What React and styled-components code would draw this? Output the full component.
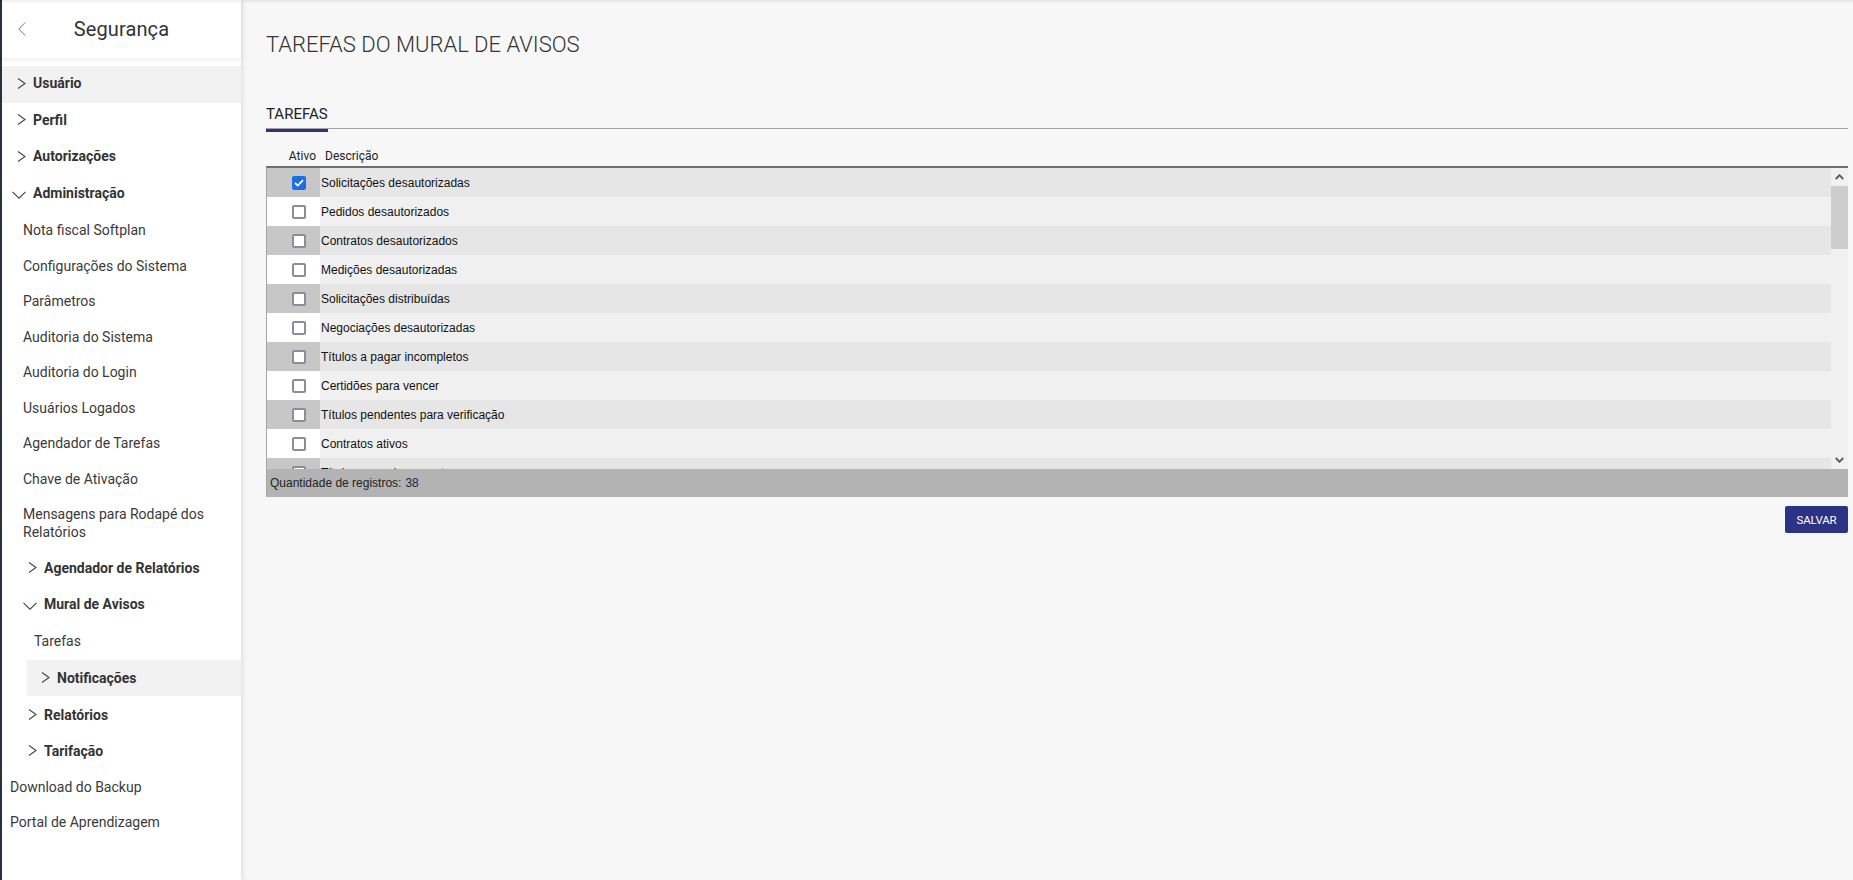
import React from 'react'
import styled, { createGlobalStyle } from 'styled-components'

const GlobalStyle = createGlobalStyle`
  html, body {
    margin: 0;
    padding: 0;
    height: 100%;
  }
  body {
    font-family: Roboto, "Noto Sans", sans-serif;
    color: #333;
    background: #f7f7f7;
  }
  #root {
    height: 100%;
  }
`

const Layout = styled.div`
  position: relative;
  display: flex;
  height: 100vh;
  overflow: hidden;
  background: #f7f7f7;

  &::before {
    content: '';
    position: absolute;
    top: 0;
    left: 0;
    right: 0;
    height: 4px;
    background: linear-gradient(rgba(0, 0, 0, 0.07), rgba(0, 0, 0, 0));
    z-index: 3;
    pointer-events: none;
  }
`

const Sidebar = styled.aside`
  position: relative;
  z-index: 1;
  width: 239px;
  flex-shrink: 0;
  background: #fff;
  border-left: 2px solid #29303e;
  box-shadow: 2px 0 5px rgba(0, 0, 0, 0.09);
  display: flex;
  flex-direction: column;
`

const SideHeader = styled.header`
  height: 58px;
  display: grid;
  grid-template-columns: 1fr auto 1fr;
  align-items: center;
  box-shadow: 0 2px 4px rgba(0, 0, 0, 0.07);

  h1 {
    margin: 0;
    font-size: 20px;
    font-weight: 400;
    color: #333;
    letter-spacing: 0.1px;
  }
`

const BackButton = styled.span`
  justify-self: start;
  margin-left: 16px;
  display: flex;
  align-items: center;
`

const Menu = styled.nav`
  margin-top: 8px;
  display: flex;
  flex-direction: column;
`

const GroupRow = styled.div`
  box-sizing: border-box;
  display: flex;
  align-items: center;
  height: ${p => p.$h}px;
  padding-bottom: ${p => p.$lift}px;
  margin-left: ${p => p.$inset}px;
  padding-left: ${p => p.$pad}px;
  background: ${p => (p.$active ? '#f2f2f2' : 'transparent')};
  font-size: 14px;
  font-weight: 700;
  color: #333;
`

const ChevronBox = styled.span`
  width: 15px;
  margin-right: 7px;
  display: flex;
  justify-content: flex-end;
  align-items: center;
  padding-top: ${p => (p.$open ? 4 : 0)}px;
`

const LinkRow = styled.div`
  padding: ${p => p.$padY}px 12px ${p => p.$padY}px ${p => p.$pad}px;
  font-size: 14px;
  line-height: 18px;
  color: #3a3a3a;
`

const Main = styled.main`
  flex: 1;
  min-width: 0;
  padding: 31px 5px 0 25px;
  display: flex;
  flex-direction: column;
`

const Title = styled.h2`
  margin: 0;
  font-size: 22px;
  line-height: 28px;
  font-weight: 300;
  color: #333;
`

const TabStrip = styled.div`
  margin-top: 46px;
  padding-bottom: 5px;
  border-bottom: 1px solid #a3a3a3;
  display: flex;
`

const Tab = styled.span`
  position: relative;
  font-size: 15px;
  line-height: 18px;
  color: #222;

  &::after {
    content: '';
    position: absolute;
    left: 0;
    right: 0;
    bottom: -9px;
    height: 3px;
    background: ${p => (p.$active ? '#2b3286' : 'transparent')};
  }
`

const HeadRow = styled.div`
  margin-top: 16px;
  height: 21px;
  display: flex;
  align-items: center;
  font-size: 12px;
  color: #222;
`

const HeadCell = styled.span`
  width: ${p => (p.$w ? `${p.$w}px` : 'auto')};
  flex: ${p => (p.$w ? 'none' : 1)};
  text-align: ${p => p.$align || 'left'};
  padding: ${p => p.$pad};
  box-sizing: border-box;
`

const Table = styled.section`
  border-top: 2px solid #6e6e6e;
  border-left: 1px solid #a6a6a6;
  display: flex;
  flex-direction: column;
`

const Body = styled.div`
  display: flex;
  height: 301px;
`

const Rows = styled.div`
  flex: 1;
  overflow: hidden;
  display: flex;
  flex-direction: column;
`

const Row = styled.div`
  flex-shrink: 0;
  display: flex;
  height: 29px;
  font-family: "Liberation Sans", Arial, sans-serif;
  font-size: 12px;
  color: #111;
`

const CheckCell = styled.div`
  width: 53px;
  flex-shrink: 0;
  display: flex;
  align-items: center;
  padding-left: 25px;
  box-sizing: border-box;
  background: ${p => (p.$odd ? '#c7c7c7' : '#ffffff')};
`

const DescCell = styled.div`
  flex: 1;
  display: flex;
  align-items: center;
  padding-left: 1px;
  background: ${p => (p.$odd ? '#e6e6e6' : '#f0f0f0')};
`

const Box = styled.span`
  width: 14px;
  height: 14px;
  box-sizing: border-box;
  border-radius: 2px;
  display: flex;
  align-items: center;
  justify-content: center;
  background: ${p => (p.$checked ? '#1a6fe3' : '#fff')};
  border: ${p => (p.$checked ? 'none' : '2px solid #8e8c98')};
`

const ScrollBar = styled.div`
  width: 17px;
  flex-shrink: 0;
  background: #f1f1f1;
  display: flex;
  flex-direction: column;
`

const ScrollArrow = styled.span`
  height: 18px;
  display: flex;
  align-items: center;
  justify-content: center;
`

const Thumb = styled.span`
  height: 63px;
  background: #cdcdcd;
`

const Track = styled.span`
  flex: 1;
`

const Footer = styled.div`
  height: 28px;
  display: flex;
  align-items: center;
  padding-left: 3px;
  background: #b3b3b3;
  font-family: "Liberation Sans", Arial, sans-serif;
  font-size: 12px;
  color: #222;

  b {
    font-weight: 400;
    color: #17244a;
    margin-left: 4px;
  }
`

const Actions = styled.div`
  margin-top: 9px;
  display: flex;
  justify-content: flex-end;
`

const SaveButton = styled.button`
  width: 63px;
  height: 27px;
  border: none;
  border-radius: 2px;
  background: #2b3384;
  color: #fff;
  font-family: Roboto, sans-serif;
  font-size: 11.5px;
  letter-spacing: -0.2px;
  padding: 0;
  cursor: pointer;
`

const ChevronRight = () => (
  <svg width="9" height="11" viewBox="0 0 9 11">
    <polyline points="1,0.5 8,5.5 1,10.5" fill="none" stroke="#444" strokeWidth="1.1" />
  </svg>
)

const ChevronDown = () => (
  <svg width="14" height="8" viewBox="0 0 14 8">
    <polyline points="0.5,0.8 7,7.2 13.5,0.8" fill="none" stroke="#444" strokeWidth="1.1" />
  </svg>
)

const menu = [
  { type: 'group', level: 0, label: 'Usuário', active: true },
  { type: 'group', level: 0, label: 'Perfil' },
  { type: 'group', level: 0, label: 'Autorizações' },
  { type: 'group', level: 0, label: 'Administração', open: true },
  { type: 'link', level: 1, label: 'Nota fiscal Softplan' },
  { type: 'link', level: 1, label: 'Configurações do Sistema' },
  { type: 'link', level: 1, label: 'Parâmetros' },
  { type: 'link', level: 1, label: 'Auditoria do Sistema' },
  { type: 'link', level: 1, label: 'Auditoria do Login' },
  { type: 'link', level: 1, label: 'Usuários Logados' },
  { type: 'link', level: 1, label: 'Agendador de Tarefas' },
  { type: 'link', level: 1, label: 'Chave de Ativação' },
  { type: 'link', level: 1, label: 'Mensagens para Rodapé dos Relatórios' },
  { type: 'group', level: 1, label: 'Agendador de Relatórios' },
  { type: 'group', level: 1, label: 'Mural de Avisos', open: true },
  { type: 'link', level: 2, label: 'Tarefas' },
  { type: 'group', level: 2, label: 'Notificações', active: true },
  { type: 'group', level: 1, label: 'Relatórios' },
  { type: 'group', level: 1, label: 'Tarifação' },
  { type: 'link', level: 0, label: 'Download do Backup' },
  { type: 'link', level: 0, label: 'Portal de Aprendizagem' },
]

const groupPlace = [
  { inset: 0, pad: 9, h: 36.6, lift: 2 },
  { inset: 0, pad: 20, h: 36.2, lift: 0 },
  { inset: 25, pad: 8, h: 36.2, lift: 1 },
]
const linkPad = [8, 21, 32]
const linkPadY = [8.75, 8.75, 10]

const tasks = [
  'Solicitações desautorizadas',
  'Pedidos desautorizados',
  'Contratos desautorizados',
  'Medições desautorizadas',
  'Solicitações distribuídas',
  'Negociações desautorizadas',
  'Títulos a pagar incompletos',
  'Certidões para vencer',
  'Títulos pendentes para verificação',
  'Contratos ativos',
  'Títulos a receber em atraso',
  'Cotações desautorizadas',
  'Aditivos desautorizados',
  'Títulos a pagar vencidos',
]

const App = () => {
  return (
    <Layout>
      <GlobalStyle />
      <Sidebar>
        <SideHeader>
          <BackButton>
            <svg width="8" height="14" viewBox="0 0 8 14">
              <polyline points="7.2,0.5 0.8,7 7.2,13.5" fill="none" stroke="#777" strokeWidth="1" />
            </svg>
          </BackButton>
          <h1>Segurança</h1>
        </SideHeader>
        <Menu>
          {menu.map(item => {
            if (item.type === 'group') {
              const place = groupPlace[item.level]
              return (
                <GroupRow
                  key={item.label}
                  $inset={place.inset}
                  $pad={place.pad}
                  $h={place.h}
                  $lift={place.lift}
                  $active={item.active}
                >
                  <ChevronBox $open={item.open}>
                    {item.open ? <ChevronDown /> : <ChevronRight />}
                  </ChevronBox>
                  {item.label}
                </GroupRow>
              )
            }
            return (
              <LinkRow key={item.label} $pad={linkPad[item.level]} $padY={linkPadY[item.level]}>
                {item.label}
              </LinkRow>
            )
          })}
        </Menu>
      </Sidebar>

      <Main>
        <Title>TAREFAS DO MURAL DE AVISOS</Title>
        <TabStrip>
          <Tab $active>TAREFAS</Tab>
        </TabStrip>
        <HeadRow>
          <HeadCell $w={54} $align="right" $pad="0 4px 0 0">Ativo</HeadCell>
          <HeadCell $pad="0 0 0 5px">Descrição</HeadCell>
        </HeadRow>
        <Table>
          <Body>
            <Rows>
              {tasks.map((task, i) => (
                <Row key={task}>
                  <CheckCell $odd={i % 2 === 0}>
                    <Box $checked={i === 0}>
                      {i === 0 && (
                        <svg width="10" height="8" viewBox="0 0 10 8">
                          <polyline points="1,4 3.8,6.6 9,1.2" fill="none" stroke="#fff" strokeWidth="1.8" />
                        </svg>
                      )}
                    </Box>
                  </CheckCell>
                  <DescCell $odd={i % 2 === 0}>{task}</DescCell>
                </Row>
              ))}
            </Rows>
            <ScrollBar>
              <ScrollArrow>
                <svg width="9" height="6" viewBox="0 0 9 6">
                  <polyline points="0.8,5 4.5,1.2 8.2,5" fill="none" stroke="#555" strokeWidth="1.8" />
                </svg>
              </ScrollArrow>
              <Thumb />
              <Track />
              <ScrollArrow>
                <svg width="9" height="6" viewBox="0 0 9 6">
                  <polyline points="0.8,1 4.5,4.8 8.2,1" fill="none" stroke="#555" strokeWidth="1.8" />
                </svg>
              </ScrollArrow>
            </ScrollBar>
          </Body>
          <Footer>
            Quantidade de registros:<b>38</b>
          </Footer>
        </Table>
        <Actions>
          <SaveButton>SALVAR</SaveButton>
        </Actions>
      </Main>
    </Layout>
  )
}

export default App
